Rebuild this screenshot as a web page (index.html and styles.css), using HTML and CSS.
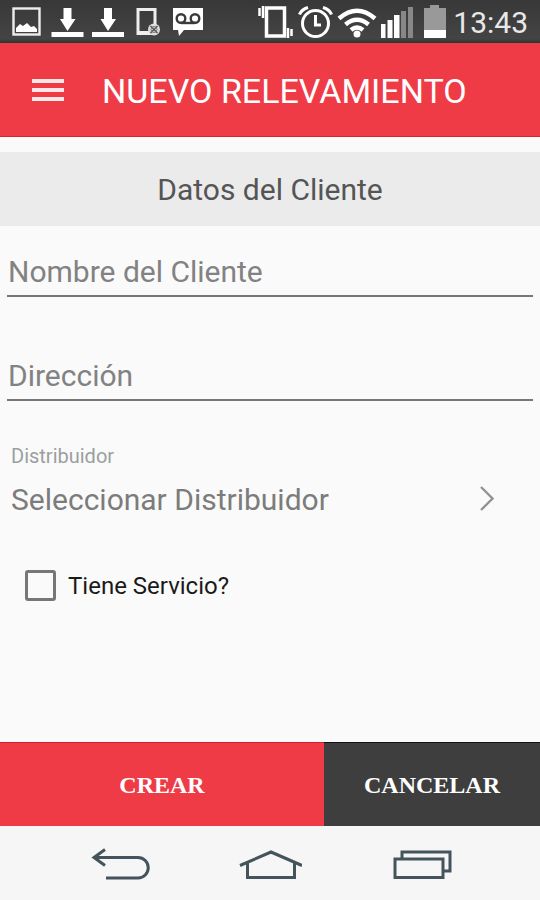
FILE: index.html
```html
<!DOCTYPE html>
<html lang="es">
<head>
<meta charset="utf-8">
<meta name="viewport" content="width=device-width, initial-scale=1">
<title>Nuevo Relevamiento</title>
<link rel="stylesheet" href="styles.css">
</head>
<body>
<div class="screen">
  <div class="status">
    <div class="status-icons left">
      <svg width="34" height="36" viewBox="0 0 34 36"><rect x="3.500" y="4.500" width="26" height="26" fill="none" stroke="#eee" stroke-width="2.400"/><path d="M6 28v-4l4-4 3 2 4-3 4 4 3-1 3 3v3z" fill="#fff"/></svg>
      <svg width="34" height="36" viewBox="0 0 34 36"><path d="M13.500 4h8v11h4L17.500 27 10 15h3.500zM1.500 28h32v5h-32z" fill="#fff"/></svg>
      <svg width="34" height="36" viewBox="0 0 34 36"><path d="M14 4h8v11h4L18 27 10.500 15H14zM2 28h32v5H2z" fill="#fff"/></svg>
      <svg width="34" height="36" viewBox="0 0 34 36"><rect x="8" y="5.500" width="17" height="24" fill="none" stroke="#eee" stroke-width="3"/><path d="M7 27h14v4H7z" fill="#eee"/><circle cx="24" cy="25.500" r="6" fill="#ddd"/><path d="m20.500 22 7 7m0-7-7 7" stroke="#555" stroke-width="1.500"/><circle cx="24" cy="25.500" r="3" fill="none" stroke="#777"/></svg>
      <svg width="34" height="36" viewBox="0 0 34 36"><path d="M3 4h30v22H14l-5 6-1-6H3z" fill="#fff"/><g fill="none" stroke="#3a3a3a" stroke-width="2.400"><circle cx="11" cy="14.500" r="4.300"/><circle cx="25" cy="14.500" r="4.300"/><path d="M11 19h14"/></g></svg>
    </div>
    <div class="status-icons right">
      <svg width="36" height="36" viewBox="0 0 36 36"><rect x="9.500" y="4" width="18" height="28" fill="none" stroke="#fff" stroke-width="3.500"/><path d="M2.500 4v8M6 2v12M31 24v10M34.500 25v7" stroke="#fff" stroke-width="2.500"/></svg>
      <svg width="36" height="36" viewBox="0 0 36 36"><g fill="none" stroke="#fff"><circle cx="18.500" cy="19.500" r="13" stroke-width="3"/><path d="M18.500 11v10H24" stroke-width="3"/><path d="M2.500 10.500q2-5 8.500-7M34.500 10.500q-2-5-8.500-7" stroke-width="3.200"/></g></svg>
      <svg width="40" height="36" viewBox="0 0 40 36"><g fill="none" stroke="#fff" stroke-width="4.500"><path d="M2 14.500Q20 -1 38 14.500M8.500 20.500Q20 11 31.500 20.500"/><path d="M14 26q6-5 12 0"/></g><circle cx="20" cy="30" r="3.500" fill="#fff"/></svg>
      <svg width="32" height="36" viewBox="0 0 32 36"><path d="M0 20h4.500v14H0zM6.500 16h5v18h-5zM13 11h5.500v23H13z" fill="#fff"/><path d="M20 7h5v27h-5zM27 3h5v31h-5z" fill="#888"/></svg>
      <svg width="32" height="36" viewBox="0 0 32 36"><path d="M7 4h6V1h9v3h7v23H7z" fill="#999"/><path d="M7 26h22v8H7z" fill="#fff"/></svg>
      <span class="clock">13:43</span>
    </div>
  </div>
  <header class="appbar">
    <button class="menu" type="button" aria-label="Menú"><svg width="32" height="24" viewBox="0 0 32 24"><path d="M0 2h32M0 11h32M0 20h32" stroke="#fff" stroke-opacity=".88" stroke-width="4"/></svg></button>
    <h1>NUEVO RELEVAMIENTO</h1>
  </header>
  <form class="form">
    <h2>Datos del Cliente</h2>
    <div class="fields">
      <input class="text" type="text" placeholder="Nombre del Cliente" aria-label="Nombre del Cliente">
      <input class="text" type="text" placeholder="Dirección" aria-label="Dirección">
    </div>
    <div class="picker">
      <label class="caption" for="distribuidor">Distribuidor</label>
      <button class="choose" id="distribuidor" type="button">Seleccionar Distribuidor
        <svg width="16" height="28" viewBox="0 0 16 28"><path d="m2 1 11.500 11.500L2 24" fill="none" stroke="#929292" stroke-width="2.400"/></svg>
      </button>
    </div>
    <div class="check">
      <input type="checkbox" id="servicio">
      <label for="servicio">Tiene Servicio?</label>
    </div>
    <div class="actions">
      <button class="create" type="submit">CREAR</button>
      <button class="cancel" type="button">CANCELAR</button>
    </div>
  </form>
  <nav class="nav">
    <button type="button" aria-label="Atrás"><svg width="64" height="36" viewBox="0 0 64 36"><path d="M8 10.500h44a10 10 0 0 1 0 20.500H20M19 2.500 8 10.500l11 8" fill="none" stroke="#44545c" stroke-width="3"/></svg></button>
    <button type="button" aria-label="Inicio"><svg width="64" height="36" viewBox="0 0 64 36"><path d="M2 18.500 33 5l31 13.500M9.500 16v14.500h47V16" fill="none" stroke="#44545c" stroke-width="3"/></svg></button>
    <button type="button" aria-label="Recientes"><svg width="64" height="36" viewBox="0 0 64 36"><path d="M5 12h48v18.500H5zM12 12V5h48v19h-7" fill="none" stroke="#44545c" stroke-width="3"/></svg></button>
  </nav>
</div>
</body>
</html>
```
FILE: styles.css
```css
* {
  box-sizing: border-box;
}

body {
  margin: 0;
  background: #fafafa;
  font-family: Roboto, "Liberation Sans", sans-serif;
}

button {
  border: 0;
  padding: 0;
  margin: 0;
  background: none;
  font: inherit;
  cursor: pointer;
}

svg {
  display: block;
  flex: none;
}

.screen {
  display: flex;
  flex-direction: column;
  min-height: 100vh;
}

.status {
  display: flex;
  justify-content: space-between;
  align-items: center;
  padding: 4px 12px 3px 10px;
  background: linear-gradient(#383838, #444 90%, #2c3436);
}

.status-icons {
  display: flex;
  align-items: center;
}

.left {
  gap: 6px;
}

.right {
  gap: 4px;
}

.clock {
  color: #e8e8e8;
  font-size: 30px;
  line-height: 38px;
  height: 36px;
}

.appbar {
  display: flex;
  align-items: center;
  gap: 38px;
  padding: 28px 32px 25px;
  border-bottom: 1px solid #dc202c;
  background: #ef3b46;
}

h1 {
  margin: 0;
  color: #fff;
  font-size: 34px;
  font-weight: 400;
  line-height: 40px;
  white-space: nowrap;
}

.form {
  display: flex;
  flex: 1;
  flex-direction: column;
  padding-top: 15px;
}

h2 {
  margin: 0;
  padding: 20px 0 18px;
  background: #ebebeb;
  color: #555;
  font-size: 30px;
  font-weight: 400;
  line-height: 36px;
  text-align: center;
}

.fields {
  display: flex;
  flex-direction: column;
  gap: 48px;
  padding: 15px 7px 0;
}

.text {
  width: 100%;
  height: 56px;
  padding: 12px 0 6px 1px;
  border: 0;
  border-bottom: 2px solid #777;
  border-radius: 0;
  background: none;
  color: #333;
  font: 30px/36px Roboto, "Liberation Sans", sans-serif;
}

.text::placeholder {
  color: #828282;
  opacity: 1;
}

.picker {
  padding: 43px 11px 0;
}

.caption {
  display: block;
  color: #9a9fa1;
  font-size: 20px;
  line-height: 24px;
}

.choose {
  display: flex;
  align-items: center;
  justify-content: space-between;
  width: 100%;
  padding: 14px 34px 14px 0;
  color: #7c7c7c;
  font-size: 30px;
  line-height: 36px;
  text-align: left;
}

.check {
  display: flex;
  align-items: center;
  gap: 12px;
  padding: 38px 25px 32px;
  color: #1a1a1a;
  font-size: 24px;
  line-height: 30px;
}

.check input {
  appearance: none;
  width: 31px;
  height: 31px;
  margin: 0;
  border: 3px solid #777;
  border-radius: 3px;
}

.check input:checked {
  background: #ef3b46;
}

.actions {
  display: grid;
  grid-template-columns: 3fr 2fr;
  margin-top: auto;
}

.actions button {
  padding: 27px 0 26px;
  border-top: 1px solid #d01f2b;
  background: #ef3b46;
  color: #fff;
  font-family: "Liberation Serif", serif;
  font-size: 24px;
  font-weight: 700;
  line-height: 30px;
}

.actions .cancel {
  border-color: #111;
  background: #3e3e3f;
}

.nav {
  display: flex;
  justify-content: center;
  gap: 88px;
  padding: 21px 0 17px;
  background: #f6f6f6;
}
```
